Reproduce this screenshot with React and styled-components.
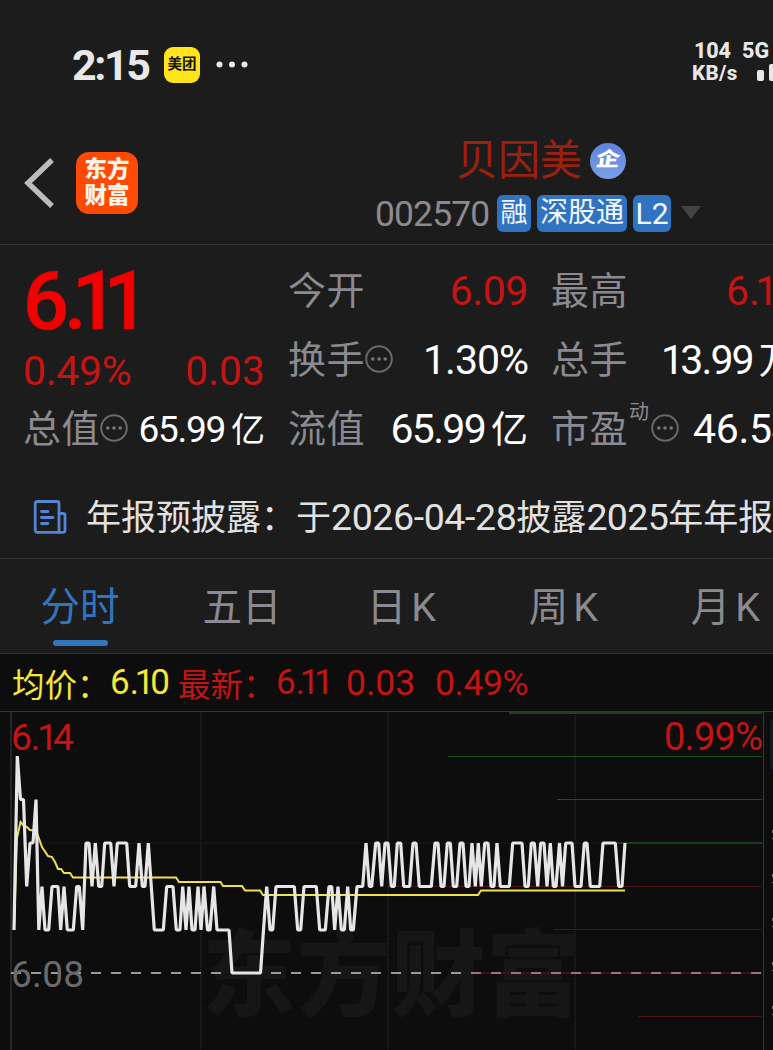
// src/App.jsx

import React from 'react';
import styled, { createGlobalStyle, ThemeProvider } from 'styled-components';

const theme = {
  background: '#1c1c1c',
  chartBackground: '#0d0d0d',
  line: '#333335',
  label: '#8b8a90',
  text: '#e2e2e2',
  white: '#ffffff',
  red: '#c41414',
  brightRed: '#ee0202',
  blue: '#3275bd',
  yellow: '#f5e63c',
};

const GlobalStyle = createGlobalStyle`
  * {
    box-sizing: border-box;
  }

  body {
    margin: 0;
    background: #1c1c1c;
    overflow: hidden;
  }
`;

const Page = styled.div`
  width: 773px;
  height: 1050px;
  overflow: hidden;
  display: flex;
  flex-direction: column;
  background: ${({ theme }) => theme.background};
  font-family: Roboto, 'Noto Sans CJK SC', sans-serif;
  white-space: nowrap;

  > * {
    flex-shrink: 0;
  }
`;

// shared text pieces
const Num = styled.span`
  font-size: ${({ $size }) => $size}px;
  letter-spacing: ${({ $gap }) => $gap || 0}px;
  font-weight: ${({ $weight }) => $weight || 400};
  color: ${({ theme, $color }) => theme[$color || 'white']};
`;

// pulls the next digit closer, used around "." and "1"
const Tight = styled.span`
  letter-spacing: ${({ $em }) => $em || -0.11}em;
`;

const Unit = styled.span`
  font-size: ${({ $size }) => $size}px;
  margin-left: ${({ $left }) => $left}px;
  letter-spacing: 0;
`;

// status bar
const StatusBar = styled.div`
  height: 130px;
  padding: 0 0 0 72px;
  display: flex;
  align-items: center;

  > * {
    flex-shrink: 0;
  }
`;

const Clock = styled.div`
  width: 92px;
  font-size: 43px;
  font-weight: 700;
  line-height: 130px;
  letter-spacing: -2.4px;
  color: #e8e8e8;
`;

const MeituanIcon = styled.div`
  width: 36px;
  height: 36px;
  border-radius: 9px;
  background: #ffe41c;
  color: #111;
  font-size: 14.5px;
  font-weight: 700;
  line-height: 35px;
  text-align: center;
`;

const StatusDots = styled.svg`
  margin-left: 16px;
`;

const Speed = styled.div`
  margin: -6px 0 0 441px;
  width: 51px;
  display: flex;
  flex-direction: column;
  font-weight: 800;
  line-height: 23px;
  color: #e8e8e8;
`;

const SpeedValue = styled.span`
  padding-left: 3px;
  font-size: 21.5px;
  letter-spacing: -0.2px;
`;

const SpeedUnit = styled.span`
  padding-left: 1px;
  font-size: 20.5px;
  letter-spacing: 0.4px;
`;

const Signal = styled.div`
  margin-top: -6px;
  width: 60px;
  height: 46px;
  font-size: 21.5px;
  font-weight: 800;
  line-height: 23px;
  color: #e8e8e8;

  svg {
    display: block;
  }
`;

// header
const Header = styled.header`
  height: 115px;
  padding-left: 24px;
  display: flex;
  align-items: flex-start;
  border-bottom: 1px solid ${({ theme }) => theme.line};
`;

const Back = styled.svg`
  margin-top: 26px;
`;

const AppLogo = styled.div`
  margin: 22px 0 0 20px;
  width: 62px;
  height: 62px;
  padding-top: 4px;
  border-radius: 13px;
  background: #ff4a05;
  color: #fff4e8;
  font-size: 22.5px;
  font-weight: 900;
  line-height: 26px;
  text-align: center;
`;

const Stock = styled.div`
  margin-left: 237px;
`;

const StockName = styled.div`
  height: 62px;
  padding-left: 81px;
  display: flex;
  align-items: center;
  color: #9b200f;
  font-size: 42px;
  line-height: 62px;
`;

const CompanyBadge = styled.span`
  width: 36px;
  height: 36px;
  margin-left: 8px;
  border-radius: 50%;
  background: linear-gradient(#5f82dd, #7ba0e6);
  color: #fff;
  font-size: 22px;
  font-weight: 900;
  line-height: 34px;
  text-align: center;
`;

const CompanyMark = styled.span`
  display: inline-block;
  transform: skewX(-8deg) scale(1.1, 0.9);
`;

const StockMeta = styled.div`
  height: 40px;
  margin-top: 1px;
  display: flex;
  align-items: center;
`;

const Code = styled.span`
  width: 122px;
  padding-top: 2px;
  font-size: 35.5px;
  letter-spacing: -0.9px;
  color: ${({ theme }) => theme.label};
`;

const Tag = styled.span`
  width: ${({ $width }) => $width}px;
  height: 37px;
  margin-right: 6px;
  border-radius: 6px;
  background: #3173c0;
  color: #f2f8ff;
  font-size: ${({ $size }) => $size}px;
  line-height: ${({ $line }) => $line || 36}px;
  text-align: center;
`;

// quote numbers
const Quote = styled.section`
  height: 235px;
  padding: 12px 0 0 23px;
  display: grid;
  grid-template-columns: 242px 240px 260px;
  column-gap: 23px;
`;

const QuoteColumn = styled.div`
  display: flex;
  flex-direction: column;
`;

const Price = styled.div`
  height: 90px;
  line-height: 90px;
  font-size: 81px;
  font-weight: 500;
  letter-spacing: -5px;
  color: ${({ theme }) => theme.brightRed};
  -webkit-text-stroke: 0.6px ${({ theme }) => theme.brightRed};
`;

const QuoteRow = styled.div`
  height: ${({ $height }) => $height || 69}px;
  line-height: ${({ $height }) => $height || 69}px;
  display: flex;
  align-items: center;
  justify-content: space-between;
`;

const Label = styled.span`
  display: flex;
  align-items: center;
  color: ${({ theme }) => theme.label};
  font-size: 38px;
  letter-spacing: 0.5px;
`;

// label with a fixed width, the number starts right after it
const WideLabel = styled(Label)`
  width: ${({ $width }) => $width}px;
  flex-shrink: 0;
`;

const StartRow = styled(QuoteRow)`
  justify-content: flex-start;
`;

const Sup = styled.span`
  margin: -34px 2px 0 1px;
  font-size: 20px;
  letter-spacing: 0;
`;

const MoreSvg = styled.svg`
  margin-top: -4px;
`;

// notice
const Notice = styled.div`
  height: 79px;
  padding: 0 0 5px 33px;
  display: flex;
  align-items: center;
  border-bottom: 1px solid ${({ theme }) => theme.line};
  color: ${({ theme }) => theme.text};
  font-size: 35px;

  svg {
    flex-shrink: 0;
    margin-right: 19px;
  }
`;

const NoticeText = styled.span`
  margin-top: -4px;
`;

const NoticeNum = styled.span`
  font-size: 37.5px;
  letter-spacing: ${({ $gap }) => $gap}px;
`;

// tabs
const Tabs = styled.nav`
  height: 95px;
  margin-left: -1px;
  display: flex;
  border-bottom: 1px solid ${({ theme }) => theme.line};
`;

const Tab = styled.div`
  width: 162px;
  padding-top: 16px;
  flex-shrink: 0;
  display: flex;
  flex-direction: column;
  align-items: center;
  font-size: 39.5px;
  line-height: 65px;
  letter-spacing: ${({ $gap }) => $gap || 0}px;
  color: ${({ theme, $active }) => ($active ? theme.blue : theme.label)};

  &::after {
    content: '';
    width: 55px;
    height: 6px;
    border-radius: 3px;
    background: ${({ theme, $active }) => ($active ? theme.blue : 'transparent')};
  }
`;

// chart
const InfoBar = styled.div`
  height: 58px;
  padding-left: 12px;
  display: flex;
  align-items: center;
  background: ${({ theme }) => theme.chartBackground};
  border-bottom: 1px solid ${({ theme }) => theme.line};
`;

const InfoCell = styled.span`
  width: ${({ $width }) => $width}px;
  font-size: ${({ $size }) => $size || 32.5}px;
  letter-spacing: ${({ $gap }) => $gap || 0}px;
  color: ${({ theme, $color }) => theme[$color]};
`;

const ChartSvg = styled.svg`
  display: block;
  background: ${({ theme }) => theme.chartBackground};
`;

const More = () => (
  <MoreSvg width="28" height="28" viewBox="0 0 28 28">
    <circle cx="14" cy="14" r="12.8" fill="none" stroke="#69696b" strokeWidth="2" />
    <circle cx="7.8" cy="14" r="1.8" fill="#77777a" />
    <circle cx="14" cy="14" r="1.8" fill="#77777a" />
    <circle cx="20.2" cy="14" r="1.8" fill="#77777a" />
  </MoreSvg>
);

const NoticeIcon = () => (
  <svg width="34" height="34" viewBox="0 0 34 34" fill="none" stroke="#5584d2" strokeWidth="2.8" strokeLinejoin="round" strokeLinecap="round">
    <path d="M26 32.3H4.2a2 2 0 0 1-2-2V3.5a2 2 0 0 1 2-2h19.8a2 2 0 0 1 2 2z" />
    <path d="M26 13.5h4a2 2 0 0 1 2 2v14.8a2 2 0 0 1-2 2h-4" />
    <path d="M8.5 11.5h6.4M8.5 17.5h11.5M8.5 23.5h6.4" />
  </svg>
);

// y position of every price level
const levels = { 13: 756, 12: 799.5, 11: 843, 10: 886.5, 9: 930, 8: 973 };

// [x, cents above 6.00]
const prices = [
  [14, 9], [17.3, 13], [20.5, 12], [23.5, 12], [26.7, 10], [30, 11], [33, 11], [36, 12], [38.8, 9],
  [42, 10], [45, 9], [48.7, 9], [52, 10], [58, 10], [60.7, 9], [64, 10], [67.3, 9], [73.3, 9],
  [76.7, 10], [79.3, 10], [82.7, 9], [86, 11], [89, 11], [92, 10], [95.3, 11], [98.7, 10], [101.7, 10],
  [104.7, 11], [110.7, 11], [114, 10], [117.3, 11], [126.7, 11], [129.7, 10], [135.7, 10], [139, 11],
  [142.3, 10], [145, 10], [148.3, 11], [151.3, 10], [154.3, 9], [163.3, 9], [166.7, 10], [173, 10],
  [176.3, 9], [180, 9], [182.7, 10], [186, 9], [189, 10], [192, 9], [195, 9], [198, 10], [201, 9],
  [204, 10], [207.5, 9], [210, 9], [213.7, 10], [217, 9], [229, 9], [232, 8], [260.5, 8], [263.5, 9],
  [266.7, 10], [270, 9], [272.7, 9], [276, 10], [294.3, 10], [297.7, 9], [300.7, 9], [304, 10],
  [316.3, 10], [319.7, 9], [325.3, 9], [329, 10], [331.7, 10], [334.7, 9], [338, 10], [341.3, 9],
  [344.3, 9], [347.7, 10], [350.7, 9], [353.3, 9], [357, 10], [362.7, 10], [366, 11], [369.3, 10],
  [371.7, 10], [375.7, 11], [378.7, 11], [381.7, 10], [385, 11], [388, 11], [391.3, 10], [394.3, 10],
  [397.3, 11], [400.7, 11], [403.7, 10], [409.7, 10], [413, 11], [416, 11], [419.3, 10], [431.3, 10],
  [435, 11], [438, 11], [441, 10], [444, 10], [447.3, 11], [450.3, 11], [453.3, 10], [456.7, 10],
  [460, 11], [463, 11], [466, 10], [469, 10], [472, 11], [475.3, 10], [478.3, 11], [481.3, 10],
  [484.7, 11], [488, 11], [491, 10], [494, 10], [497, 11], [500.3, 10], [509.3, 10], [512.7, 11],
  [522, 11], [525, 10], [528.3, 10], [531.3, 11], [534.3, 11], [537.7, 10], [540.7, 11], [544, 11],
  [547, 10], [550.3, 11], [553.3, 10], [556, 10], [559.5, 11], [562.5, 10], [565.7, 11], [572, 11],
  [575, 10], [581, 10], [584.3, 11], [587, 11], [590.3, 10], [599.7, 10], [603, 11], [615.3, 11],
  [618.7, 10], [622, 10], [625, 11],
];

const average =
  '14,928 17,838 20.5,822 23,825 27,827 30,830 34,830.5 37,833 42,847 48,856 52,857 55,862 58,869 61,869 64,873 70,873 73,877.5 176,877.5 179,882 220.5,882 223,886 242,886 245,890.5 260,890.5 263,895 478,895 481,890.5 625,890.5';

const depth = [
  { y: 713, x: 509, color: '#1d431e', width: 2 },
  { y: 756.5, x: 448, color: '#1c5220' },
  { y: 799.5, x: 557, color: '#1c5220' },
  { y: 843, x: 612, color: '#1c4a20', width: 1.6 },
  { y: 886.5, x: 388, color: '#4e1416' },
  { y: 929.5, x: 554, color: '#4e1416' },
  { y: 973, x: 469, color: '#3c1214', width: 2 },
  { y: 1016.5, x: 638, color: '#4e1416' },
];

const Chart = () => (
  <ChartSvg width="773" height="338" viewBox="0 712 773 338">
    <text x="202" y="1009" fontSize="94" fontWeight="900" fill="#161616" textLength="378">东方财富</text>
    <path d="M11 712V1050" stroke="#262628" strokeWidth="2" />
    <path d="M763.5 712V1050" stroke="#38383a" />
    {[201, 388, 575].map((x) => (
      <path key={x} d={`M${x} 713V1050`} stroke="#202022" strokeWidth="2" strokeDasharray="1 1" />
    ))}
    <path d="M12 843H763" stroke="#252527" strokeDasharray="1.5 1.5" />
    <path d="M11 973H762" stroke="#9a9a9a" strokeWidth="2" strokeDasharray="10 10" />
    {depth.map(({ y, x, color, width }) => (
      <path key={y} d={`M${x} ${y}H762`} stroke={color} strokeWidth={width || 1} />
    ))}
    <path d="M471 973H762" stroke="#9a7476" strokeWidth="2" strokeDasharray="10 10" />
    <polyline points={average} fill="none" stroke="#f0e04c" strokeWidth="2" />
    <polyline
      points={prices.map(([x, p]) => `${x},${levels[p]}`).join(' ')}
      fill="none"
      stroke="#e6e6e6"
      strokeWidth="3.2"
      strokeLinejoin="bevel"
    />
    <text x="11" y="750" dx="0 -1.5 -3.5 -5" fontSize="37.5" fill="#c41414">6.14</text>
    <text x="664" y="750" fontSize="38" fill="#c41414" textLength="99">0.99%</text>
    <text x="11" y="987" fontSize="37" fill="#6a6a6a" textLength="73">6.08</text>
    <rect x="770" y="718" width="10" height="53" rx="6" fill="#141a24" />
    {[831, 875, 919, 963, 1007].map((y) => (
      <path key={y} d={`M772.5 ${y - 1}v3M772.5 ${y + 7}v1`} stroke="#777" />
    ))}
  </ChartSvg>
);

const App = () => {
  return (
    <ThemeProvider theme={theme}>
      <GlobalStyle />
      <Page>
        <StatusBar>
          <Clock>2:15</Clock>
          <MeituanIcon>美团</MeituanIcon>
          <StatusDots width="34" height="8" viewBox="0 0 34 8" fill="#e8e8e8">
            <circle cx="3.5" cy="3.5" r="3" />
            <circle cx="16" cy="3.5" r="3" />
            <circle cx="28.5" cy="3.5" r="3" />
          </StatusDots>
          <Speed>
            <SpeedValue>104</SpeedValue>
            <SpeedUnit>KB/s</SpeedUnit>
          </Speed>
          <Signal>
            5G
            <svg width="60" height="23" viewBox="0 0 60 23" fill="#e8e8e8">
              <rect x="15" y="8" width="7" height="11" rx="2" />
              <rect x="27" y="2" width="7" height="17" rx="2" />
            </svg>
          </Signal>
        </StatusBar>

        <Header>
          <Back width="32" height="54" viewBox="0 0 32 54" fill="none" stroke="#bcbcbc" strokeWidth="5.4">
            <path d="M28 4L4 27l24 23" />
          </Back>
          <AppLogo>
            东方
            <br />
            财富
          </AppLogo>
          <Stock>
            <StockName>
              贝因美
              <CompanyBadge>
                <CompanyMark>企</CompanyMark>
              </CompanyBadge>
            </StockName>
            <StockMeta>
              <Code>002570</Code>
              <Tag $width={34} $size={27}>融</Tag>
              <Tag $width={90} $size={28}>深股通</Tag>
              <Tag $width={38} $size={30} $line={38}>L2</Tag>
              <svg width="28" height="14" viewBox="0 0 28 14">
                <path d="M4 0h20L14 13z" fill="#434345" />
              </svg>
            </StockMeta>
          </Stock>
        </Header>

        <Quote>
          <QuoteColumn>
            <Price>6<Tight $em={-0.18}>.1</Tight>1</Price>
            <QuoteRow $height={48}>
              <Num $size={41} $gap={-0.3} $color="red">0.49%</Num>
              <Num $size={40.5} $gap={0.2} $color="red">0.03</Num>
            </QuoteRow>
            <QuoteRow>
              <Label>总值<More /></Label>
              <Num $size={37} $gap={-1.3}>65.99<Unit $size={34} $left={6}>亿</Unit></Num>
            </QuoteRow>
          </QuoteColumn>
          <QuoteColumn>
            <QuoteRow>
              <Label>今开</Label>
              <Num $size={41} $gap={-0.4} $color="red">6.09</Num>
            </QuoteRow>
            <QuoteRow>
              <Label>换手<More /></Label>
              <Num $size={41} $gap={-1}>1.30%</Num>
            </QuoteRow>
            <QuoteRow>
              <Label>流值</Label>
              <Num $size={41} $gap={-1.7}>65.99<Unit $size={37} $left={6}>亿</Unit></Num>
            </QuoteRow>
          </QuoteColumn>
          <QuoteColumn>
            <StartRow>
              <WideLabel $width={175}>最高</WideLabel>
              <Num $size={41} $color="red">6<Tight>.1</Tight>4</Num>
            </StartRow>
            <StartRow>
              <WideLabel $width={110}>总手</WideLabel>
              <Num $size={41} $gap={-1.9}><Tight $em={-0.09}>1</Tight>3.99<Unit $size={37} $left={6}>万</Unit></Num>
            </StartRow>
            <StartRow>
              <WideLabel $width={142}>市盈<Sup>动</Sup><More /></WideLabel>
              <Num $size={41} $gap={-0.3}>46.54</Num>
            </StartRow>
          </QuoteColumn>
        </Quote>

        <Notice>
          <NoticeIcon />
          <NoticeText>
            年报预披露：于<NoticeNum $gap={-0.4}>2026-04-28</NoticeNum>披露<NoticeNum $gap={-0.6}>2025</NoticeNum>年年报
          </NoticeText>
        </Notice>

        <Tabs>
          <Tab $active>分时</Tab>
          <Tab>五日</Tab>
          <Tab $gap={5}>日K</Tab>
          <Tab $gap={5}>周K</Tab>
          <Tab $gap={5}>月K</Tab>
        </Tabs>

        <InfoBar>
          <InfoCell $width={98} $color="yellow">均价：</InfoCell>
          <InfoCell $width={68} $size={35} $color="yellow">6<Tight $em={-0.12}>.1</Tight>0</InfoCell>
          <InfoCell $width={98} $color="red">最新：</InfoCell>
          <InfoCell $width={70} $size={35} $color="red">6<Tight $em={-0.15}>.1</Tight>1</InfoCell>
          <InfoCell $width={89} $size={35.5} $color="red">0.03</InfoCell>
          <InfoCell $width={100} $size={35.5} $gap={-0.4} $color="red">0.49%</InfoCell>
        </InfoBar>

        <Chart />
      </Page>
    </ThemeProvider>
  );
};

export default App;
